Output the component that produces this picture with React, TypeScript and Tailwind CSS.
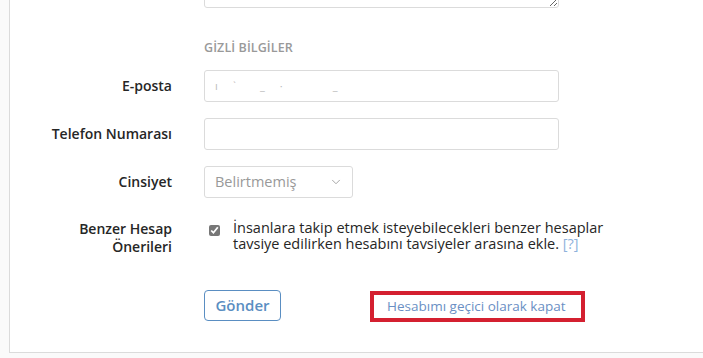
import { ChevronDown } from 'lucide-react'

const font = { fontFamily: '"Open Sans", "Liberation Sans", sans-serif' }

function Row({ label, children, className = '' }: { label: React.ReactNode; children: React.ReactNode; className?: string }) {
  return (
    <div className={`flex items-center ${className}`}>
      <label className="w-[162px] shrink-0 text-right text-[14px] font-semibold text-[#262626] leading-[18px]">{label}</label>
      <div className="ml-8 flex-1">{children}</div>
    </div>
  )
}

export default function App() {
  return (
    <div className="w-[703px] h-[358px] bg-[#fafafa] overflow-hidden" style={font}>
      <div className="ml-[9px] h-[353px] bg-white border-l border-b border-[#dbdbdb] overflow-hidden">
        {/* bio textarea, scrolled mostly out of view */}
        <div className="pl-[194px]">
          <textarea className="block w-[355px] h-[60px] -mt-[52px] rounded-[3px] border border-[#dbdbdb] bg-white" />
        </div>

        <div className="pl-[194px] mt-[32px] text-[12.5px] font-semibold text-[#999] leading-[16px] tracking-[0.1px]">
          GİZLİ BİLGİLER
        </div>

        <Row label="E-posta" className="mt-[14px]">
          <div className="w-[355px] h-[32px] rounded-[3px] border border-[#dbdbdb] flex items-center px-[10px] text-[11px] text-[#bbb] tracking-[6px]">
            <span>ı ˋ&nbsp;&nbsp;_ ·&nbsp;&nbsp;&nbsp;&nbsp;&nbsp;_</span>
          </div>
        </Row>

        <Row label="Telefon Numarası" className="mt-[16px]">
          <div className="w-[355px] h-[32px] rounded-[3px] border border-[#dbdbdb]" />
        </Row>

        <Row label="Cinsiyet" className="mt-[16px]">
          <div className="w-[149px] h-[32px] rounded-[3px] border border-[#dbdbdb] flex items-center justify-between pl-[10px] pr-[9px] text-[14.5px] text-[#999]">
            <span>Belirtmemiş</span>
            <ChevronDown className="w-[14px] h-[14px] text-[#999]" strokeWidth={1.5} />
          </div>
        </Row>

        <div className="flex mt-[22px]">
          <div className="w-[162px] shrink-0 text-right text-[14px] font-semibold text-[#262626] leading-[18px]">
            Benzer Hesap<br />Önerileri
          </div>
          <div className="ml-8 flex items-start">
            <input type="checkbox" defaultChecked className="mt-[5px] ml-[5px] w-[11px] h-[11px] accent-[#777]" />
            <p className="ml-[13px] text-[14.5px] text-[#262626] leading-[16px] w-[410px]">
              İnsanlara takip etmek isteyebilecekleri benzer hesaplar tavsiye edilirken hesabını tavsiyeler arasına ekle.{' '}
              <span className="text-[#8fb2dc]">[?]</span>
            </p>
          </div>
        </div>

        <div className="flex items-center pl-[194px] mt-[32px]">
          <button className="w-[77px] h-[31px] rounded-[4px] border border-[#5a8ec2] text-[#5a8ec2] text-[15px] font-semibold">
            Gönder
          </button>
          <div className="ml-[89px] mt-[3px] w-[215px] h-[31px] border-[4px] border-[#d42030] flex items-center pl-[13px]">
            <a className="text-[13.5px] text-[#6a8fc4] leading-none">Hesabımı geçici olarak kapat</a>
          </div>
        </div>
      </div>
    </div>
  )
}
